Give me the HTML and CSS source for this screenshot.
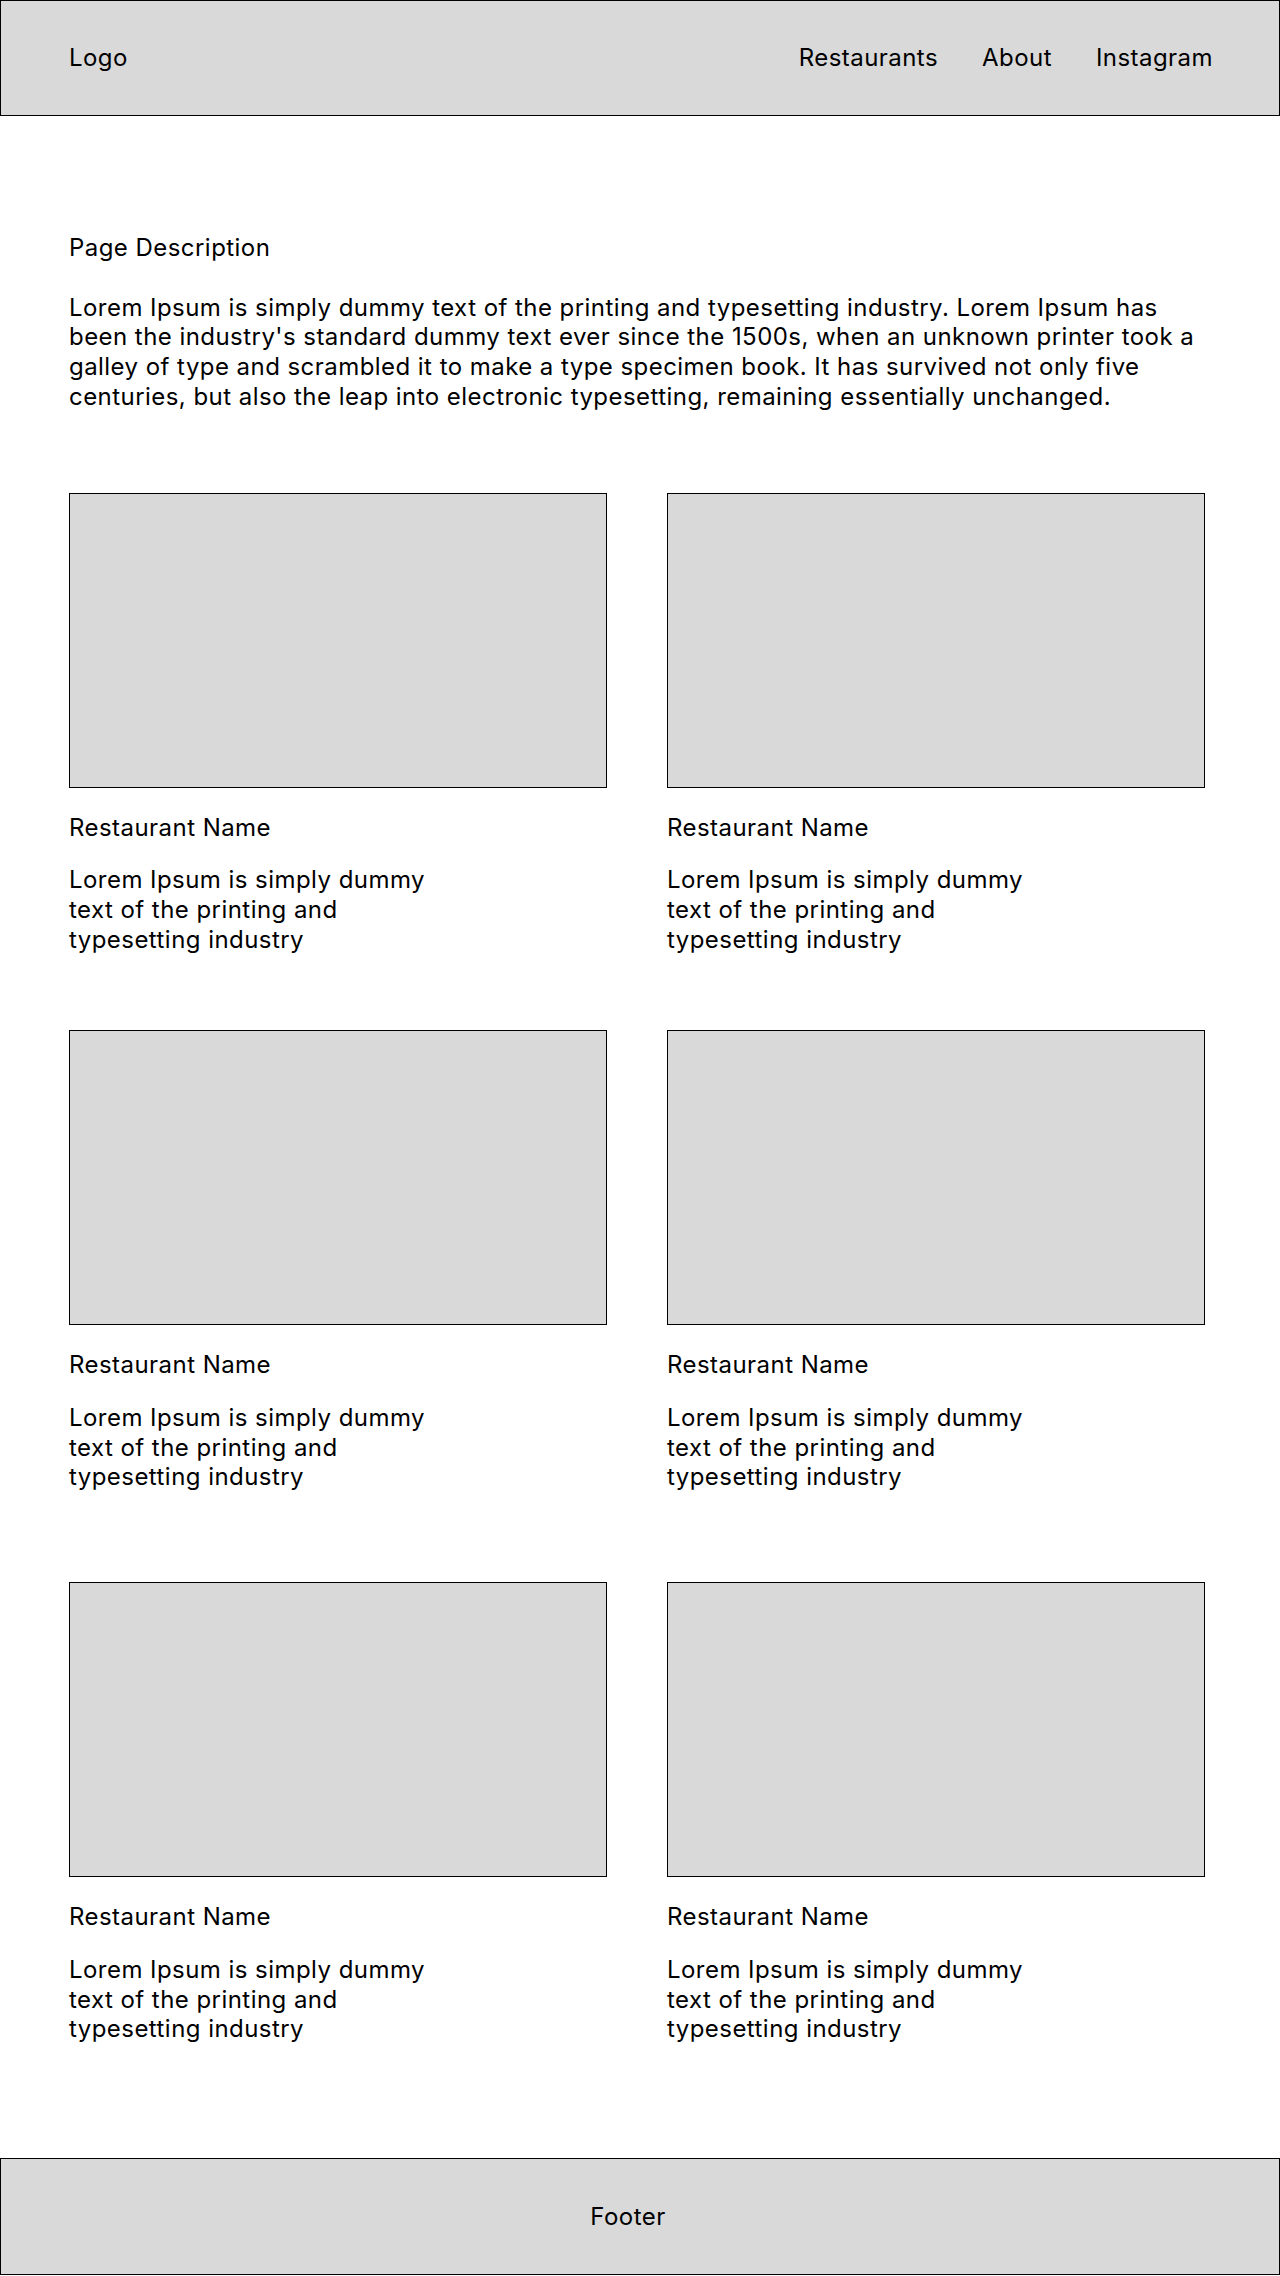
FILE: index.html
```html
<!DOCTYPE html>
<html lang="en">
<head>
<meta charset="utf-8">
<title>Restaurants</title>
<link rel="stylesheet" href="styles.css">
</head>
<body>
<header class="site-header">
  <div class="logo">Logo</div>
  <nav class="nav">
    <a class="nav-link" href="#">Restaurants</a>
    <a class="nav-link" href="#">About</a>
    <a class="nav-link" href="#">Instagram</a>
  </nav>
</header>

<main class="main">
  <section class="intro">
    <h1 class="intro-title">Page Description</h1>
    <p class="intro-text">Lorem Ipsum is simply dummy text of the printing and typesetting industry. Lorem Ipsum has been the industry's standard dummy text ever since the 1500s, when an unknown printer took a galley of type and scrambled it to make a type specimen book. It has survived not only five centuries, but also the leap into electronic typesetting, remaining essentially unchanged.</p>
  </section>

  <section class="grid">
    <article class="card">
      <div class="card-image"></div>
      <h2 class="card-title">Restaurant Name</h2>
      <p class="card-text">Lorem Ipsum is simply dummy<br>text of the printing and<br>typesetting industry</p>
    </article>
    <article class="card">
      <div class="card-image"></div>
      <h2 class="card-title">Restaurant Name</h2>
      <p class="card-text">Lorem Ipsum is simply dummy<br>text of the printing and<br>typesetting industry</p>
    </article>
    <article class="card">
      <div class="card-image"></div>
      <h2 class="card-title">Restaurant Name</h2>
      <p class="card-text">Lorem Ipsum is simply dummy<br>text of the printing and<br>typesetting industry</p>
    </article>
    <article class="card">
      <div class="card-image"></div>
      <h2 class="card-title">Restaurant Name</h2>
      <p class="card-text">Lorem Ipsum is simply dummy<br>text of the printing and<br>typesetting industry</p>
    </article>
    <article class="card card-spaced">
      <div class="card-image"></div>
      <h2 class="card-title">Restaurant Name</h2>
      <p class="card-text">Lorem Ipsum is simply dummy<br>text of the printing and<br>typesetting industry</p>
    </article>
    <article class="card card-spaced">
      <div class="card-image"></div>
      <h2 class="card-title">Restaurant Name</h2>
      <p class="card-text">Lorem Ipsum is simply dummy<br>text of the printing and<br>typesetting industry</p>
    </article>
  </section>
</main>

<footer class="site-footer">
  <span class="footer-text">Footer</span>
</footer>
</body>
</html>
```

FILE: styles.css
```css
* {
  box-sizing: border-box;
}

html, body {
  margin: 0;
  padding: 0;
  background: #ffffff;
}

body {
  width: 1280px;
  font-family: Inter, "Noto Sans", "Liberation Sans", sans-serif;
  font-size: 24px;
  font-weight: 400;
  line-height: 29.7px;
  letter-spacing: 0.45px;
  color: #000000;
}

.site-header {
  height: 116px;
  background: #d9d9d9;
  border: 1px solid #000000;
  display: flex;
  align-items: center;
  justify-content: space-between;
  padding: 0 66px 0 68px;
}

.logo {
  font-size: 24px;
}

.nav {
  display: flex;
  gap: 44px;
}

.nav-link {
  color: #000000;
  text-decoration: none;
}

.main {
  padding: 117px 69px 114px 69px;
}

.intro-title {
  margin: 0;
  font-size: 24px;
  font-weight: 400;
  line-height: 29.7px;
}

.intro-text {
  margin: 30px 0 0;
  width: 1145px;
}

.grid {
  margin-top: 81px;
  display: grid;
  grid-template-columns: 538px 538px;
  column-gap: 60px;
  row-gap: 76px;
}

.card-spaced {
  margin-top: 14px;
}

.card-image {
  height: 295px;
  background: #d9d9d9;
  border: 1px solid #000000;
}

.card-title {
  margin: 25px 0 0;
  font-size: 24px;
  font-weight: 400;
  line-height: 29.7px;
}

.card-text {
  margin: 23px 0 0;
}

.site-footer {
  height: 117px;
  background: #d9d9d9;
  border: 1px solid #000000;
  display: flex;
  align-items: center;
  justify-content: center;
  padding-right: 24px;
}
```
